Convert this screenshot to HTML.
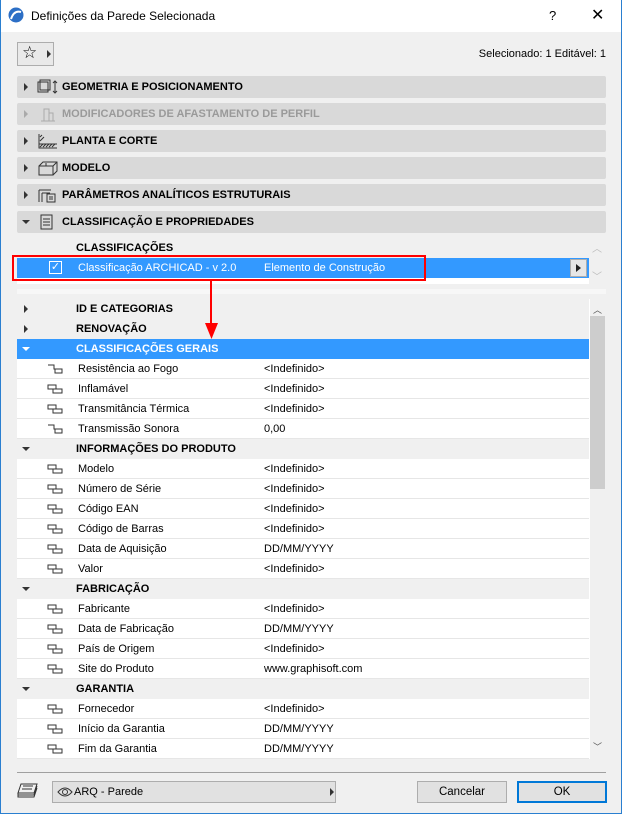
<!DOCTYPE html>
<html><head><meta charset="utf-8"><style>
*{margin:0;padding:0;box-sizing:border-box}
body{width:622px;height:814px;overflow:hidden;background:#f0f0f0;font-family:"Liberation Sans",sans-serif;font-size:11.5px;color:#000;position:relative}
.a{position:absolute}
.win{left:0;top:0;width:622px;height:814px;border:1px solid #2a7fd0;border-top:none}
.tb{left:0;top:0;width:622px;height:32px;background:#fff}
.hdr{left:17px;width:589px;height:22px;background:#d9d9d9;border-radius:2px;font-weight:bold;font-size:11px;line-height:23px}
.hdr .t{position:absolute;left:45px}
.tri{position:absolute;left:7px;top:7px;width:0;height:0;border-left:4px solid #333;border-top:4px solid transparent;border-bottom:4px solid transparent}
.trd{position:absolute;left:5px;top:9px;width:0;height:0;border-top:4px solid #333;border-left:4px solid transparent;border-right:4px solid transparent}
.row{left:17px;width:572px;height:20px;line-height:21px;font-size:11px}
.g{background:#f0f0f0;font-weight:bold}
.p{background:#fff;border-bottom:1px solid #e6e6e6}
.row .n{position:absolute;left:61px}
.row .v{position:absolute;left:247px}
.row .ic{position:absolute;left:30px;top:5px}
.row.g .n{left:59px}
</style></head><body>
<div class="a tb"></div>
<svg class="a" style="left:8px;top:7px" width="16" height="16"><circle cx="8" cy="8" r="7.5" fill="#2c6fc6"/><path d="M3 12 Q6 3 13 5" stroke="#fff" stroke-width="2" fill="none"/></svg>
<div class="a" style="left:31px;top:9px;font-size:12px">Definições da Parede Selecionada</div>
<div class="a" style="left:549px;top:8px;font-size:13px">?</div>
<div class="a" style="left:591px;top:5px;font-size:16px">✕</div>

<div class="a" style="left:17px;top:42px;width:37px;height:24px;border:1px solid #adadad;background:#e9e9e9"></div>
<div class="a" style="left:22px;top:43px;font-size:17px">☆</div>
<div class="a" style="left:47px;top:50px;border-left:4px solid #333;border-top:4px solid transparent;border-bottom:4px solid transparent"></div>
<div class="a" style="right:16px;top:48px;font-size:11px">Selecionado: 1 Editável: 1</div>

<div class="a hdr" style="top:76px"><div class="tri"></div><svg class="a" style="left:20px;top:3px" width="22" height="16"><rect x="1" y="3" width="10" height="10" fill="none" stroke="#333"/><rect x="3" y="1" width="10" height="10" fill="none" stroke="#333"/><path d="M18 2v12M16 4l2-2 2 2M16 12l2 2 2-2" stroke="#333" fill="none"/></svg><span class="t">GEOMETRIA E POSICIONAMENTO</span></div>
<div class="a hdr" style="top:103px;color:#9a9a9a"><div class="tri" style="border-left-color:#aaa"></div><svg class="a" style="left:22px;top:3px" width="18" height="16"><path d="M2 15h14M5 15V3h5v12M10 7h4v8" stroke="#aaa" fill="none"/></svg><span class="t">MODIFICADORES DE AFASTAMENTO DE PERFIL</span></div>
<div class="a hdr" style="top:130px"><div class="tri"></div><svg class="a" style="left:20px;top:3px" width="22" height="16"><path d="M2 1v14h18M2 11h18" stroke="#333" fill="none"/><path d="M3 14l3-3M6 14l3-3M9 14l3-3M12 14l3-3M15 14l3-3M3 8l4-4M3 4l2-2" stroke="#333"/></svg><span class="t">PLANTA E CORTE</span></div>
<div class="a hdr" style="top:157px"><div class="tri"></div><svg class="a" style="left:20px;top:3px" width="22" height="16"><path d="M2 6h14v9H2zM2 6l4-4h14v9l-4 4M16 6l4-4M9 6V3" stroke="#333" fill="none"/></svg><span class="t">MODELO</span></div>
<div class="a hdr" style="top:184px"><div class="tri"></div><svg class="a" style="left:20px;top:3px" width="22" height="16"><path d="M2 3h12M2 3v12M5 6h8M5 6v9" stroke="#333" fill="none"/><rect x="10" y="7" width="8" height="8" fill="none" stroke="#333"/><path d="M12 10h4M12 12h4" stroke="#333"/></svg><span class="t">PARÂMETROS ANALÍTICOS ESTRUTURAIS</span></div>
<div class="a hdr" style="top:211px"><div class="trd"></div><svg class="a" style="left:22px;top:3px" width="16" height="16"><rect x="2" y="1" width="11" height="14" fill="none" stroke="#333"/><path d="M4 5h7M4 8h7M4 11h7" stroke="#333"/></svg><span class="t">CLASSIFICAÇÃO E PROPRIEDADES</span></div>

<div class="a" style="left:76px;top:242px;font-weight:bold;font-size:11px">CLASSIFICAÇÕES</div>
<div class="a" style="left:17px;top:258px;width:572px;height:20px;background:#3399ff"></div>
<div class="a" style="left:17px;top:278px;width:572px;height:6px;background:#fff"></div>
<div class="a" style="left:49px;top:261px;width:13px;height:13px;border:1px solid #fff;color:#fff;font-size:11px;line-height:11px;text-align:center">✓</div>
<div class="a" style="left:78px;top:262px;color:#fff;font-size:11px">Classificação ARCHICAD - v 2.0</div>
<div class="a" style="left:264px;top:262px;color:#fff;font-size:11px">Elemento de Construção</div>
<div class="a" style="left:12px;top:255px;width:414px;height:26px;border:2px solid #f00"></div>
<div class="a" style="left:570px;top:259px;width:17px;height:18px;background:#e6e6e6;border:1px solid #adadad"></div>
<div class="a" style="left:576px;top:264px;border-left:5px solid #222;border-top:4px solid transparent;border-bottom:4px solid transparent"></div>
<div class="a" style="left:592px;top:240px;color:#bbb;font-size:10px">︿</div>
<div class="a" style="left:592px;top:268px;color:#bbb;font-size:10px">﹀</div>
<div class="a" style="left:17px;top:289px;width:589px;height:5px;background:#f7f7f7"></div>

<div class="a" style="left:17px;top:299px;width:573px;height:460px;background:#fff"></div>
<div class="a" style="left:590px;top:299px;width:16px;height:460px;background:#f0f0f0"></div>
<div class="a" style="left:590px;top:316px;width:15px;height:173px;background:#cdcdcd"></div>
<div class="a" style="left:593px;top:303px;font-size:9px;color:#555">︿</div>
<div class="a" style="left:593px;top:740px;font-size:9px;color:#555">﹀</div>

<div id="L"></div>
<svg class="a" style="left:204px;top:279px" width="16" height="62"><path d="M7 0v48" stroke="#f00" stroke-width="2"/><path d="M1 44h13l-6.5 16z" fill="#f00"/></svg>

<div class="a" style="left:17px;top:772px;width:589px;height:1px;background:#a0a0a0"></div>
<svg class="a" style="left:16px;top:781px" width="24" height="20"><path d="M5 3h16l-3 9H2z M2 12v2h16l3-9 M2 14v2h16l3-9" fill="none" stroke="#333"/><path d="M7 5h10M6 8h10" stroke="#333"/></svg>
<div class="a" style="left:52px;top:781px;width:284px;height:22px;background:#e1e1e1;border:1px solid #adadad"></div>
<svg class="a" style="left:57px;top:786px" width="16" height="12"><path d="M1 6Q8-2 15 6Q8 14 1 6z" fill="none" stroke="#333"/><circle cx="8" cy="6" r="2.5" fill="none" stroke="#333"/></svg>
<div class="a" style="left:74px;top:786px;font-size:11px">ARQ - Parede</div>
<div class="a" style="left:330px;top:788px;border-left:4px solid #333;border-top:4px solid transparent;border-bottom:4px solid transparent"></div>
<div class="a" style="left:417px;top:781px;width:90px;height:22px;background:#e1e1e1;border:1px solid #adadad;text-align:center;line-height:21px;font-size:11.5px">Cancelar</div>
<div class="a" style="left:517px;top:781px;width:90px;height:22px;background:#e1e1e1;border:2px solid #0078d7;text-align:center;line-height:19px;font-size:11.5px">OK</div>
<div class="a win"></div>
<script>
var R=[["g","r","ID E CATEGORIAS"],["g","r","RENOVAÇÃO"],["s","d","CLASSIFICAÇÕES GERAIS"],
["p",1,"Resistência ao Fogo","<Indefinido>"],["p",2,"Inflamável","<Indefinido>"],["p",2,"Transmitância Térmica","<Indefinido>"],["p",1,"Transmissão Sonora","0,00"],
["g","d","INFORMAÇÕES DO PRODUTO"],["p",2,"Modelo","<Indefinido>"],["p",2,"Número de Série","<Indefinido>"],["p",2,"Código EAN","<Indefinido>"],["p",2,"Código de Barras","<Indefinido>"],["p",2,"Data de Aquisição","DD/MM/YYYY"],["p",2,"Valor","<Indefinido>"],
["g","d","FABRICAÇÃO"],["p",2,"Fabricante","<Indefinido>"],["p",2,"Data de Fabricação","DD/MM/YYYY"],["p",2,"País de Origem","<Indefinido>"],["p",2,"Site do Produto","www.graphisoft.com"],
["g","d","GARANTIA"],["p",2,"Fornecedor","<Indefinido>"],["p",2,"Início da Garantia","DD/MM/YYYY"],["p",2,"Fim da Garantia","DD/MM/YYYY"]];
var h="",y=299;
function e(s){return s.replace(/</g,"&lt;").replace(/>/g,"&gt;")}
R.forEach(function(r){
 if(r[0]=="p"){
  var ic=r[1]==1?'<svg class="ic" width="16" height="10"><path d="M1 1h6v4h8v4H8V5" fill="none" stroke="#333"/></svg>':'<svg class="ic" width="16" height="10"><path d="M1 1h8v4H1zM6 5v4h9V5H9" fill="none" stroke="#333"/></svg>';
  h+='<div class="a row p" style="top:'+y+'px">'+ic+'<span class="n">'+e(r[2])+'</span><span class="v">'+e(r[3])+'</span></div>';
 }else{
  var bg=r[0]=="s"?"background:#3399ff;color:#fff;font-weight:bold":"";
  var col=r[0]=="s"?"#fff":"#333";
  var t=r[1]=="r"?'<div style="position:absolute;left:7px;top:6px;border-left:4px solid '+col+';border-top:4px solid transparent;border-bottom:4px solid transparent"></div>':'<div style="position:absolute;left:5px;top:8px;border-top:4px solid '+col+';border-left:4px solid transparent;border-right:4px solid transparent"></div>';
  h+='<div class="a row g" style="top:'+y+'px;'+bg+'">'+t+'<span class="n">'+r[2]+'</span></div>';
 }
 y+=20;});
document.getElementById("L").innerHTML=h;
</script>
</body></html>
